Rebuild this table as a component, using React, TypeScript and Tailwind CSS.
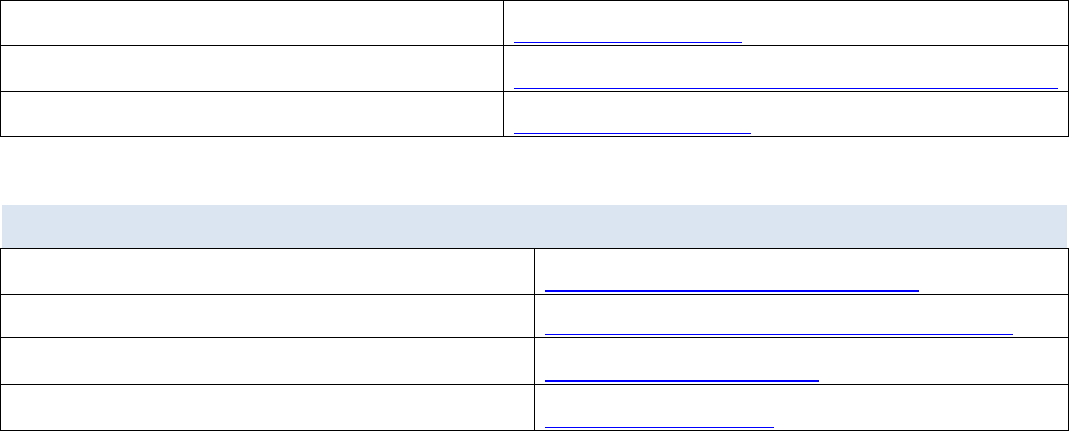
type Row = { h: string; line: string; thick?: boolean };

const topRows: Row[] = [
    { h: "h-[45px]", line: "w-[228px]" },
    { h: "h-[46px]", line: "w-[544px]" },
    { h: "h-[45px]", line: "w-[237px]" },
];

const bottomRows: Row[] = [
    { h: "h-[46px]", line: "w-[374px]", thick: true },
    { h: "h-[43px]", line: "w-[468px]" },
    { h: "h-[47px]", line: "w-[274px]", thick: true },
    { h: "h-[46px]", line: "w-[229px]" },
];

function LinkLine({ row }: { row: Row }) {
    // empty hyperlink: only its underline shows
    return <div className={`${row.line} ${row.thick ? "h-[2px]" : "h-px"} bg-[#0000ff]`}></div>;
}

export default function App() {
    return (
        <div className="w-[1069px] h-[431px] bg-white font-['Liberation_Sans',sans-serif] overflow-hidden">
            {/* first table */}
            <div className="border-l border-t border-r border-black">
                {topRows.map((row, i) => (
                    <div key={i} className={`grid grid-cols-[503px_1fr] border-b border-black ${row.h}`}>
                        <div className="border-r border-black"></div>
                        <div className="flex flex-col justify-end pl-[10px] pb-[2px]">
                            <LinkLine row={row} />
                        </div>
                    </div>
                ))}
            </div>

            {/* section heading band */}
            <div className="mt-[68px] ml-[2px] w-[1065px] h-[43px] bg-[#dbe5f1]"></div>

            {/* second table */}
            <div className="border-l border-t border-r border-black">
                {bottomRows.map((row, i) => (
                    <div key={i} className={`grid grid-cols-[534px_1fr] border-b border-black ${row.h}`}>
                        <div className="border-r border-black"></div>
                        <div className="flex flex-col justify-end pl-[10px] pb-[2px]">
                            <LinkLine row={row} />
                        </div>
                    </div>
                ))}
            </div>
        </div>
    );
}
